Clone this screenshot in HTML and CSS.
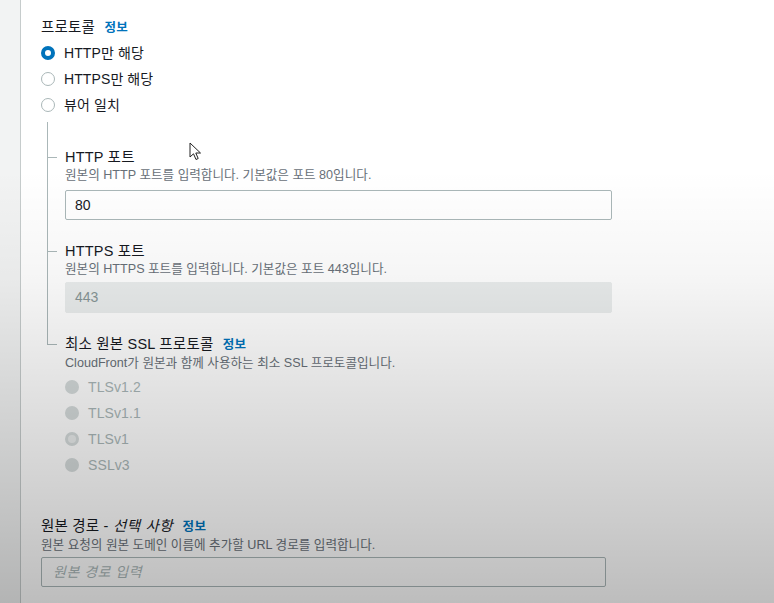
FILE: index.html
```html
<!DOCTYPE html>
<html lang="ko">
<head>
<meta charset="utf-8">
<link rel="stylesheet" href="styles.css">
</head>
<body>
<div class="page">
  <aside class="rail"></aside>
  <main class="form">
    <div class="field">
      <div class="label">프로토콜 <a class="info">정보</a></div>
      <ul class="radios">
        <li class="radio"><span class="dot checked"></span>HTTP만 해당</li>
        <li class="radio"><span class="dot"></span>HTTPS만 해당</li>
        <li class="radio"><span class="dot"></span>뷰어 일치</li>
      </ul>
      <div class="tree">
        <div class="branch">
          <div class="label">HTTP 포트</div>
          <div class="desc">원본의 HTTP 포트를 입력합니다. 기본값은 포트 80입니다.</div>
          <div class="input nested">80</div>
        </div>
        <div class="branch">
          <div class="label">HTTPS 포트</div>
          <div class="desc">원본의 HTTPS 포트를 입력합니다. 기본값은 포트 443입니다.</div>
          <div class="input nested disabled">443</div>
        </div>
        <div class="branch last">
          <div class="label">최소 원본 SSL 프로토콜 <a class="info">정보</a></div>
          <div class="desc">CloudFront가 원본과 함께 사용하는 최소 SSL 프로토콜입니다.</div>
          <ul class="radios off">
            <li class="radio"><span class="dot"></span>TLSv1.2</li>
            <li class="radio"><span class="dot"></span>TLSv1.1</li>
            <li class="radio"><span class="dot checked"></span>TLSv1</li>
            <li class="radio"><span class="dot"></span>SSLv3</li>
          </ul>
        </div>
      </div>
    </div>
    <div class="field path">
      <div class="label">원본 경로 - <em>선택 사항</em> <a class="info">정보</a></div>
      <div class="desc">원본 요청의 원본 도메인 이름에 추가할 URL 경로를 입력합니다.</div>
      <div class="input wide placeholder">원본 경로 입력</div>
    </div>
  </main>
</div>
<svg class="cursor" width="14" height="20" viewBox="0 0 14 20"><path d="M1 1 L1 15 L4.5 11.8 L7 17.5 L9.2 16.5 L6.8 11 L11.5 11 Z" fill="#fff" stroke="#222" stroke-width="1" stroke-linejoin="round"/></svg>
<div class="shade"></div>
</body>
</html>
```
FILE: styles.css
```css
* { box-sizing: border-box; }
html, body { margin: 0; padding: 0; }
body {
  width: 774px;
  height: 603px;
  overflow: hidden;
  background: #fff;
  font-family: "Liberation Sans", Arial, "Noto Sans CJK KR", sans-serif;
  font-size: 14px;
  color: #16191f;
  position: relative;
}
.page { display: flex; height: 603px; }
.rail {
  width: 21px;
  flex: none;
  background: #f2f3f3;
  border-right: 1px solid #c6cccc;
}
.form { padding: 17px 0 0 20px; flex: 1; }
.label { line-height: 20px; font-size: 14.5px; letter-spacing: 0.2px; color: #16191f; }
.label em { font-style: italic; letter-spacing: 0.6px; }
.info { color: #0073bb; font-weight: bold; font-size: 12.5px; margin-left: 5px; letter-spacing: 0.4px; }
.desc { font-size: 12.6px; line-height: 16px; color: #687078; }
.radios { list-style: none; margin: 2px 0 0; padding: 0; }
.radio { display: flex; align-items: center; height: 26px; line-height: 26px; letter-spacing: 0.1px; }
.dot {
  width: 14px; height: 14px; border-radius: 50%;
  border: 1.5px solid #aab7b8; background: #fff;
  margin-right: 9px; flex: none;
}
.dot.checked { border: 4px solid #0073bb; }
.radios.off { margin-top: 3px; }
.radios.off .radio { color: #aab7b8; }
.radios.off .dot { border: none; background: #d5dbdb; margin-right: 9px; }
.radios.off .dot.checked { border: 3px solid #d5dbdb; background: #eaeded; }

.tree { position: relative; margin: 4px 0 0 6px; padding: 25px 0 0 18px; }
.tree::before {
  content: ""; position: absolute; left: 0; top: 0; height: 25px; width: 1px; background: #aab7b8;
}
.branch { position: relative; padding-bottom: 21px; }
.branch::before {
  content: ""; position: absolute; left: -18px; top: 10px; width: 10px; height: 1px; background: #aab7b8;
}
.branch::after {
  content: ""; position: absolute; left: -18px; top: 0; bottom: 0; width: 1px; background: #aab7b8;
}
.branch.last { padding-bottom: 0; }
.branch.last::after { bottom: auto; height: 11px; }

.input {
  margin-top: 7px;
  height: 30px;
  border: 1px solid #aab7b8;
  border-radius: 2px;
  padding: 0 9px;
  line-height: 28px;
  font-size: 14px;
  color: #16191f;
  background: #fff;
}
.input.nested { width: 547px; }
.input.disabled { background: #eaeded; border-color: #eaeded; color: #879596; height: 31px; line-height: 29px; margin-top: 5px; }
.input.wide { width: 565px; margin-top: 4px; }
.placeholder { color: #aab7b8; font-style: italic; padding-left: 11px; letter-spacing: 0.5px; }
.path { margin-top: 38px; }

.cursor { position: absolute; left: 189px; top: 142px; }
.shade {
  position: absolute; inset: 0; pointer-events: none;
  background: linear-gradient(to bottom,
    rgba(0,0,0,0) 0px,
    rgba(0,0,0,0) 170px,
    rgba(0,0,0,0.04) 280px,
    rgba(0,0,0,0.12) 400px,
    rgba(0,0,0,0.2) 520px,
    rgba(0,0,0,0.26) 603px);
}
```
